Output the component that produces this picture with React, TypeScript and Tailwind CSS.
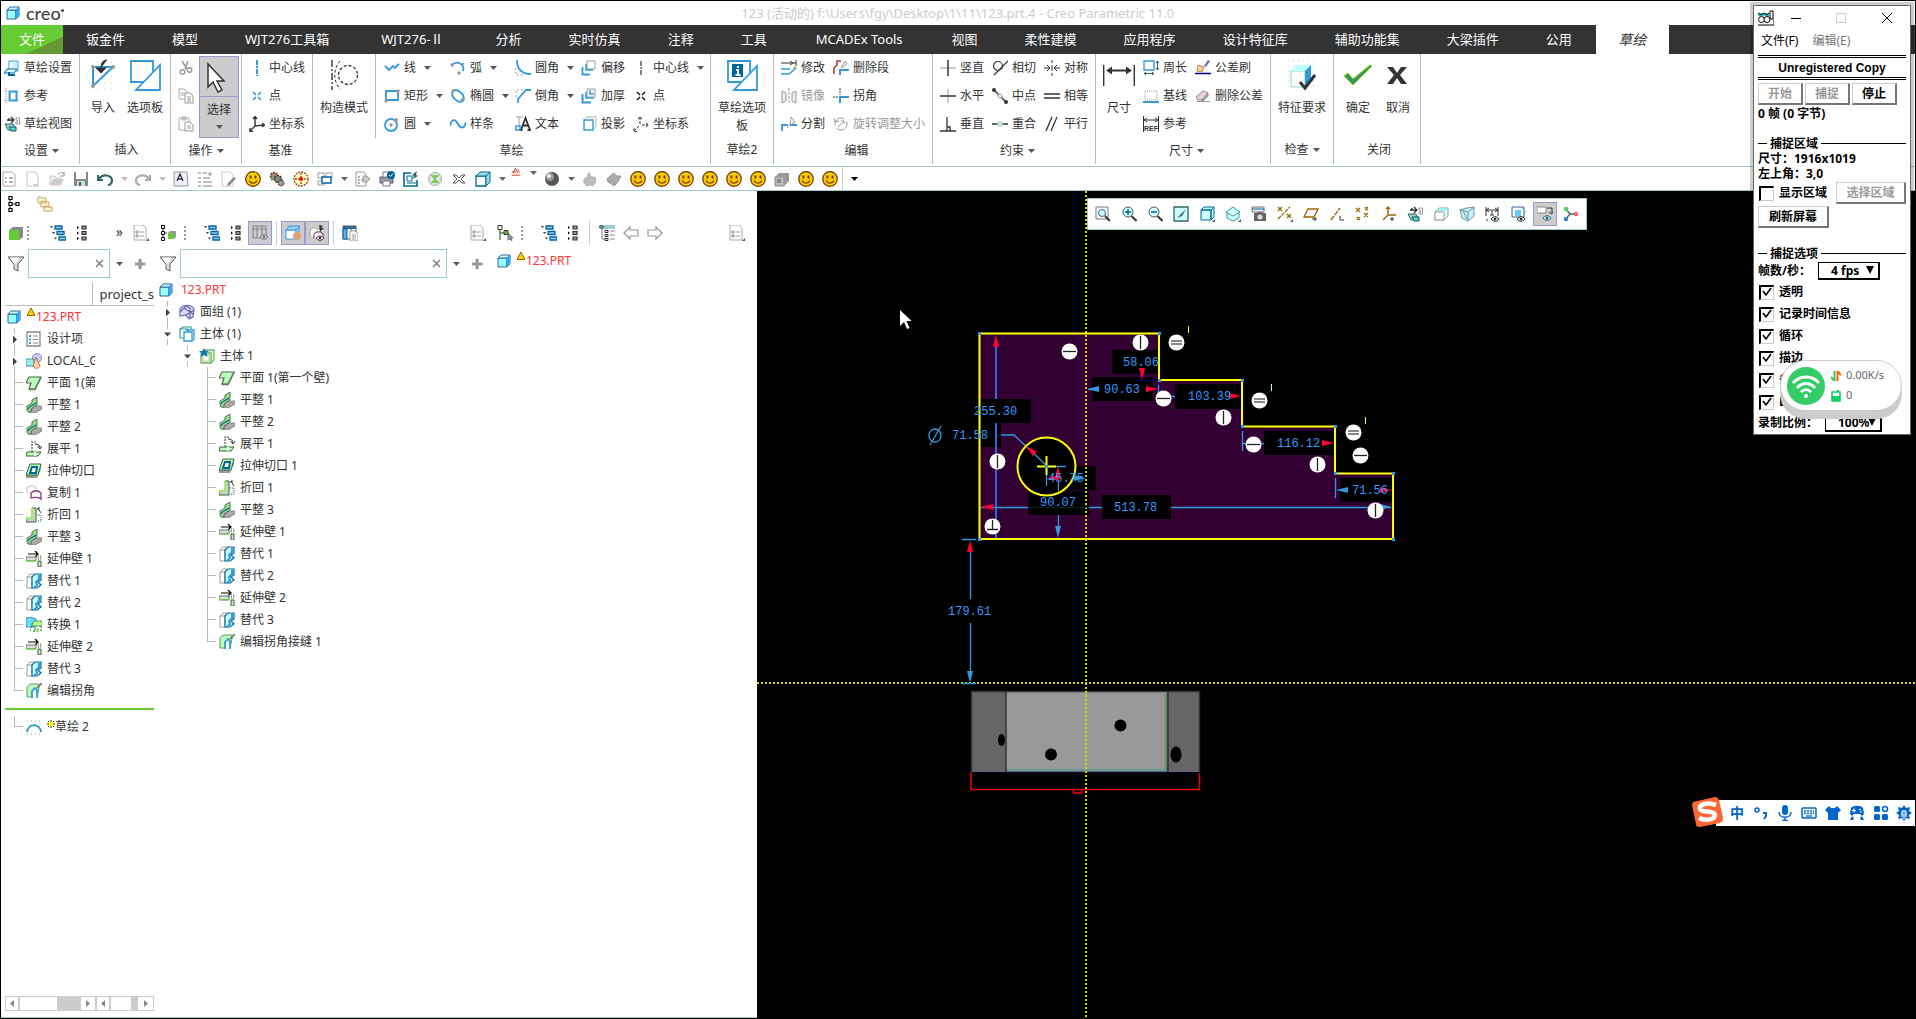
import type { ReactNode } from 'react'

const B = '#3399dd'
const G = '#999999'
const L = '#cccccc'
const D = '#333333'

// 16x16 icons
const ICONS: Record<string, ReactNode> = {
  sketchSetup: <><path d="M5 1h9v10H5z" fill="#fff" stroke={B} /><path d="M8 2h5v8H8z" fill="#cef" /><path d="M3 9h10l-3 4H0z" fill="#dff" stroke="#069" /><path d="M5 12v3h6" fill="none" stroke="#069" strokeWidth="2" /></>,
  reference: <><path d="M5.500 3v10M12.500 3v10M5 3.500h9M5 12.500h9" stroke={B} strokeWidth="2" /><path d="M2 0v16M0 3h4M0 12.500h4" stroke={G} strokeDasharray="1 1" /></>,
  sketchView: <><path d="M3 4h6M7 1l3 3-3 3M5 2v3" stroke={D} fill="none" strokeWidth="1.300" /><path d="M12 2h3.500v6H12v-2h1.500V4H12z" fill="#fff" stroke={G} /><path d="M1 8l3 6h8l-3-6z" fill="#9cc" stroke="#366" /><path d="M5 11h7v4H7z" fill="#6cc" stroke="#066" /></>,
  cut: <><path d="M4 1l5 8M10 1L7 9" stroke={G} strokeWidth="1.500" /><circle cx="4.500" cy="12" r="2.300" fill="none" stroke={G} strokeWidth="1.400" /><circle cx="11.500" cy="10" r="2.300" fill="none" stroke={G} strokeWidth="1.400" /></>,
  copy: <><path d="M1 1h5l3 3v7H1z" fill="#fff" stroke="#aaa" /><path d="M2.500 5h4M2.500 7h4" stroke="#aaa" /><path d="M7 5h5l3 3v7H7z" fill="#fff" stroke="#999" /><path d="M9 9h4M9 11h4M9 13h4" stroke="#999" /></>,
  paste: <><path d="M1 2h10v12H1z" fill="#fff" stroke="#aaa" /><path d="M4 1h4v3H4z" fill={L} stroke="#aaa" /><path d="M7 6h5l3 3v6H7z" fill="#fff" stroke="#999" /><path d="M9 10h4M9 12h4" stroke="#999" /></>,
  vline: <path d="M8 0v16" stroke={B} strokeWidth="2" strokeDasharray="5 1 2 1" />,
  pointBlue: <path d="M4 4l3 3M9 9l3 3M12 4l-3 3M7 9l-3 3" stroke={B} strokeWidth="1.600" />,
  csys: <path d="M6 1v9l9-1M6 10l-5 5M4 3l2-2.500L8 3M13 7l2.500 2-2.500 2M1 12v3.500h3" stroke={D} fill="none" strokeWidth="1.400" />,
  line: <path d="M1 6l4 4 4-4 2 2 4-4" stroke={B} strokeWidth="1.800" fill="none" />,
  rect: <><path d="M2 3h12v9H2z" stroke={B} strokeWidth="1.800" fill="none" /><circle cx="14" cy="3" r="1.800" fill={G} /><circle cx="2" cy="13" r="1.800" fill={G} /></>,
  circle: <><circle cx="7" cy="9" r="6" stroke={B} strokeWidth="1.800" fill="none" /><circle cx="7" cy="9" r="1.700" fill={G} /><circle cx="12" cy="4" r="2" fill={G} /></>,
  arc: <><path d="M2 5c5-5 13-1 11 6" stroke={B} strokeWidth="1.800" fill="none" /><circle cx="2" cy="5" r="1.700" fill={G} /><circle cx="9" cy="13" r="1.700" fill={G} /><circle cx="13" cy="4" r="1.300" fill={G} /></>,
  ellipse: <><ellipse cx="8" cy="8" rx="7" ry="4.500" transform="rotate(45 8 8)" stroke={B} strokeWidth="1.800" fill="none" /><circle cx="3" cy="3" r="1.700" fill={G} /><circle cx="12" cy="12" r="1.700" fill={G} /></>,
  spline: <path d="M0 10c2-9 6-6 8-2s6 6 8-2" stroke={B} strokeWidth="1.800" fill="none" />,
  fillet: <><path d="M2 0c0 9 5 14 14 14" stroke={B} strokeWidth="1.800" fill="none" /><path d="M1 8v7h7" stroke={G} strokeDasharray="2 2" fill="none" /></>,
  chamfer: <><path d="M3 15V11L11 2h5" stroke={B} strokeWidth="1.800" fill="none" /><path d="M1 9V2h8" stroke={G} strokeDasharray="2 2" fill="none" /></>,
  text: <><path d="M1 1h7M4 1v9" stroke={G} /><path d="M6 14l4.500-12L15 14M7.500 9.500h6M4.500 14h3M12.500 14H16" stroke={D} strokeWidth="1.800" fill="none" /><path d="M1 10h4v4H1z" fill="#fff" stroke={B} strokeWidth="1.600" /></>,
  offset: <><path d="M6 1h8v8H6z" fill="#fff" stroke={G} /><path d="M1.500 7v7.500H9" stroke={B} strokeWidth="1.800" fill="none" /><path d="M5 4v6h7" stroke={B} strokeWidth="1.400" fill="none" /></>,
  thicken: <><path d="M6 1h8v8H6z" fill="#fff" stroke={G} /><path d="M1.500 6v8.500H10" stroke={B} strokeWidth="2" fill="none" /><path d="M5 4v6h8M9 2v4h4" stroke={B} strokeWidth="1.500" fill="none" /></>,
  project: <><path d="M4 3l2-2h9v9l-2 3" fill="none" stroke={L} strokeWidth="1.500" /><path d="M3 4h9v10H3z" fill="#fff" stroke={B} strokeWidth="1.400" /></>,
  vlineBlack: <path d="M8 1v14" stroke={D} strokeWidth="1.200" strokeDasharray="5 1 2 1" />,
  pointBlack: <path d="M4 4l3 3M9 9l3 3M12 4l-3 3M7 9l-3 3" stroke="#000" strokeWidth="1.200" />,
  csysGray: <path d="M7 1v8M9 9h6M6 10l-5 5M5 3l2-2.500L9 3M13 7l2.500 2-2.500 2M1 12v3.500h3" stroke={D} fill="none" strokeDasharray="3 1" />,
  modify: <><path d="M0 3h15M15 0v6M9 1l3 2-3 2" stroke={D} fill="none" /><path d="M0 9h9M0 14h8l6-5" stroke={B} strokeWidth="1.500" fill="none" /><circle cx="14" cy="8" r="1.500" fill={G} /></>,
  mirror: <><path d="M1 3l4 2v8l-4 2zM15 3l-4 2v8l4 2z" fill="#eee" stroke={G} /><path d="M8 0v16" stroke={G} strokeDasharray="3 1" /></>,
  divide: <><path d="M1 15v-6h6M9 9h7" stroke={B} strokeWidth="1.800" fill="none" /><path d="M10 1l4 5-5 3zM9 9l-3 3" fill="#fff" stroke={G} /></>,
  delSeg: <><path d="M1 14V8l3-3V1h4" stroke="#a33" fill="none" strokeWidth="1.500" /><path d="M7 15v-5h9" stroke={B} strokeWidth="2" fill="none" /><path d="M8 8l4-7 2 3z" fill="#fff" stroke={G} /></>,
  corner: <><path d="M7 15V9h9" stroke={B} strokeWidth="2" fill="none" /><path d="M7 0v7M0 9h6" stroke={G} strokeDasharray="2 1" strokeWidth="2" /></>,
  rotate: <><circle cx="8" cy="8" r="6" fill="none" stroke={G} strokeDasharray="14 3" /><path d="M5 11l6-6M11 8V5H8M1 2l1 4 4-1" stroke={G} fill="none" /></>,
  vertical: <><path d="M0 8h16" stroke={L} strokeWidth="2" /><path d="M8 0v16" stroke={D} strokeWidth="1.500" /></>,
  horizontal: <><path d="M8 1v14" stroke={L} strokeWidth="2" /><path d="M0 8h16" stroke={D} strokeWidth="1.500" /></>,
  perp: <path d="M7 1v14M0 15h16M7 11h3v4" stroke={D} fill="none" strokeWidth="1.300" />,
  tangent: <><circle cx="6" cy="6" r="4.500" fill="none" stroke={D} strokeWidth="1.200" /><path d="M2 15L16 1" stroke={D} strokeWidth="1.200" /></>,
  midpoint: <><path d="M2 2l12 12" stroke={D} strokeWidth="1.300" /><circle cx="2" cy="2" r="2" fill={D} /><circle cx="14" cy="14" r="2" fill={D} /><circle cx="8" cy="8" r="2" fill="#fff" stroke={G} /></>,
  coincident: <><path d="M0 8h16" stroke={D} strokeWidth="1.500" /><circle cx="8" cy="8" r="2.300" fill="#cec" stroke="#9cc" /></>,
  symmetric: <path d="M0 8h5M3 5l3 3-3 3M16 8h-5M13 5l-3 3 3 3M8 0v3M8 5v6M8 13v3" stroke={D} fill="none" />,
  equal: <path d="M0 6h16M0 10h16" stroke={D} strokeWidth="1.300" />,
  parallel: <path d="M2 15L8 1M7 15l6-14" stroke={D} strokeWidth="1.300" />,
  perimeter: <><path d="M1 1h10v9H1z" fill="#fff" stroke={B} strokeWidth="1.400" /><path d="M14.500 1v9M13 3l1.500-2L16 3M13 8l1.500 2L16 8M1 13.500h10M3 12l-2 1.500L3 15M9 12l2 1.500L9 15" stroke="#366" fill="none" /></>,
  baseline: <><path d="M2 3h12v9H2z" fill="none" stroke={G} strokeDasharray="1 1" /><path d="M0 14h16" stroke={B} strokeWidth="2" /></>,
  refDim: <><path d="M.5 0v16M15.500 0v16M1 4h14M4 2L1 4l3 2M12 2l3 2-3 2" stroke={D} fill="none" /><text x="8" y="15" fontSize="7" fontWeight="bold" textAnchor="middle" fill={D} fontFamily="Liberation Sans">REF</text></>,
  brush: <><path d="M0 13.500h16" stroke="#009" strokeWidth="1.500" /><path d="M9 6l4-6 2 1-4 6z" fill="#66c" /><path d="M3 5l6 2-2 5-5-1z" fill="#fc9" stroke="#a85" /></>,
  eraser: <><path d="M1 9l7-6 5 2-6 7H3z" fill="#ecd" stroke="#888" /><path d="M7 12l6-7v3l-5 5z" fill="#9c9" stroke="#888" /><path d="M2 13.500h13" stroke="#999" /></>,
  docList: <><path d="M2 1h9l3 3v11H2z" fill="#fff" stroke="#aaa" /><path d="M4 7h2M4 11h2M8 7h4M8 11h4" stroke={G} strokeWidth="1.500" /></>,
  newDoc: <><path d="M2 1h8l3 3v11H2z" fill="#fff" stroke={L} strokeWidth="1.200" /><path d="M8 13h5v2H8z" fill={L} /></>,
  open: <><path d="M1 5h5l1 2h5v7H1z" fill="#eee" stroke={L} /><path d="M1 14l3-6h11l-3 6z" fill={L} /><path d="M9 4c1-3 4-3 5-1l1-2v4h-4" fill="none" stroke={G} /></>,
  save: <><path d="M1 1h14v14H1z" fill="#888" /><path d="M3 1h10v7H3z" fill="#fff" /><path d="M4 10h8v5H4z" fill="#cdd" /><path d="M6 11h2v4H6z" fill="#366" /></>,
  undo: <path d="M1 4v5h5M2 8c4-6 13-4 13 2 0 2-2 4-4 4" stroke="#366" strokeWidth="2.200" fill="none" />,
  redo: <path d="M15 4v5h-5M14 8C10 2 1 4 1 10c0 2 2 4 4 4" stroke="#aaa" strokeWidth="2.200" fill="none" />,
  note: <><path d="M1 1h13l1 14H1z" fill="#eef" stroke={G} /><path d="M4 10l3-7 3 7M5 8h4" fill="none" stroke={D} strokeWidth="1.300" /></>,
  treeGray: <path d="M1 2h3M6 2h4M1 7h3M6 7h7M1 11h3M6 11h9M1 15h3M6 15h9M11 3h4M13 1v4" stroke="#aaa" strokeWidth="1.500" />,
  docEdit: <><path d="M1 1h8l3 3v11H1z" fill="#fff" stroke={L} /><path d="M15 7l-6 7-3 1 1-3 6-6z" fill="#888" /></>,
  smile: <><circle cx="8" cy="8" r="7.300" fill="#fc0" stroke="#663300" strokeWidth="1.200" /><path d="M5.500 4.500v3M10.500 4.500v3" stroke="#630" strokeWidth="1.800" /><path d="M4 9.500c2 3.500 6 3.500 8 0" stroke="#630" fill="none" strokeWidth="1.200" /></>,
  gears: <><circle cx="5" cy="5" r="3.500" fill="#a87" stroke="#543" strokeDasharray="2 1" strokeWidth="1.500" /><circle cx="9" cy="8" r="3.500" fill="#888" stroke="#333" strokeDasharray="2 1" strokeWidth="1.500" /><circle cx="12" cy="12" r="3" fill="#999" stroke="#422" strokeDasharray="2 1" /><circle cx="3" cy="8" r="1.500" fill="#6a6" /></>,
  compass: <><circle cx="8" cy="8" r="7" fill="#ffc" stroke="#933" strokeDasharray="2 1" strokeWidth="1.300" /><path d="M8 2v12M2 8h12" stroke="#960" strokeWidth="1.500" strokeDasharray="2 1" /><circle cx="8" cy="8" r="2" fill="#f00" /></>,
  windows: <><path d="M1 2h6v5H1zM9 2h6v5H9zM1 10h6v4H1z" fill="#fff" stroke={G} /><path d="M5 6h9v6H5z" fill="#fff" stroke="#069" strokeWidth="1.400" /></>,
  docArrow: <><path d="M1 1h8l2 3v11H1z" fill="#fff" stroke={G} /><path d="M3 6h2M3 9h2M3 12h2M6 9h2" stroke={G} strokeWidth="1.500" /><path d="M8 5h4l3 3-3 3H8z" fill={L} stroke={G} /></>,
  print: <><path d="M1 6h13v6H1z" fill="#99a" stroke="#556" /><path d="M4 1h6v5H4zM4 10h7v5H4z" fill="#fff" stroke="#778" /><circle cx="12" cy="4" r="4" fill="#069" /><path d="M10 4l1.500 1.500L14 2.500" stroke="#fff" fill="none" /></>,
  exportBox: <><path d="M8 2H1v13h13V9" stroke="#069" fill="none" strokeWidth="1.600" /><path d="M4 5h5v5H4zM4 12h9" fill="none" stroke="#069" /><path d="M9 8l2-3-2-1 5-4-1 4 2 1z" fill="#366" /></>,
  globe: <><circle cx="8" cy="8" r="6.500" fill="#dde6dd" stroke="#aaa" /><path d="M4 4l4 4 4-4M4 12l4-4 4 4" fill="#8c5" stroke="#7b5" /></>,
  closeWin: <path d="M2 4h3l3 3 3-3h3l-4 4 4 4h-3L8 9l-3 3H2l4-4z" fill="#fff" stroke="#555" />,
  cubeLine: <><path d="M1 5h10v10H1z" fill="#fff" stroke="#069" strokeWidth="1.300" /><path d="M1 5l4-4h10l-4 4zM11 15l4-4V1l-4 4z" fill="#9dd" stroke="#069" /></>,
  relations: <><path d="M1 9h14v5H1z" fill="#ffc" /><path d="M1 8h13M3 10l4-8 2 4 4-2M1 13h14" stroke="#c33" fill="none" strokeWidth="1.500" /></>,
  sphere: <><circle cx="8" cy="8" r="7" fill="#555" /><circle cx="6" cy="6" r="4" fill="#999" /><circle cx="5" cy="5" r="2" fill="#eee" /></>,
  blob: <path d="M5 3l3-2 1 4 5 1v6l-3 3H4l-3-4 1-4 3-1z" fill="#bbb" />,
  teapot: <path d="M1 8l3-3 4-3 3 3h4l-3 6-4 4-6-4z" fill="#aaa" stroke="#888" strokeDasharray="2 1" />,
  box: <><path d="M1 6h9v9H1z" fill="#bbb" stroke="#888" /><path d="M1 6l4-4h10l-5 4zM10 15l5-5V2l-5 4z" fill="#999" /><path d="M3 8h4v4H3z" fill="#888" /></>,
  tree: <><path d="M3 3v11M3 8h6" stroke={D} fill="none" /><path d="M2 .5h3v3H2zM2 6.500h3v3H2zM2 12.500h3v3H2zM9 6.500h3v3H9z" fill="#fff" stroke="#000" strokeWidth="1.200" /></>,
  folders: <path d="M1 1h3l1 1h4v5H1zM4 5h3l1 1h4v5H4zM7 10h3l1 1h4v4H7z" fill="#ffc" stroke="#c96" />,
  cubeGreen: <><path d="M1 5h10v10H1z" fill="#6c3" /><path d="M1 5l4-3h10l-4 3zM11 15l4-3V2l-4 3z" fill="#888" /></>,
  treeBlue: <><path d="M5 1h7v3H5zM7 6.500h7v3H7zM9 12h7v3H9z" fill="#9cf" stroke="#069" strokeWidth="1.300" /><path d="M0 1h3l-1.500 2zM2 7h3L3.500 9zM4 12.500h3l-1.500 2z" fill={D} /></>,
  treeDots: <><path d="M9 1h4v3H9zM9 6.500h4v3H9zM9 12h4v3H9z" fill="#999" stroke={D} strokeWidth="1.200" /><path d="M4 1l2 1.500L4 4zM4 6.500L6 8l-2 1.500zM4 12l2 1.500L4 15z" fill="#000" /></>,
  docSettings: <><path d="M1 0h9l3 3v12H1z" fill="#fff" stroke="#aaa" /><circle cx="4" cy="7" r="1.200" fill="none" stroke="#888" /><circle cx="4" cy="11" r="1.200" fill="none" stroke="#888" /><path d="M6.500 7H11M6.500 11H11" stroke="#99a" /><path d="M16 13v3h-3z" fill="#555" /></>,
  treeCube: <><path d="M3 2v11M3 8h4" stroke={D} /><path d="M1.500 .5h3v3h-3zM1.500 6.500h3v3h-3zM1.500 12.500h3v3h-3z" fill="#fff" stroke="#000" /><path d="M8 8h6v6H8z" fill="#6c3" /><path d="M8 8l2-2h6l-2 2zM14 14l2-2V6l-2 2z" fill="#999" /></>,
  columns: <><path d="M1 1h13v12H1zM1 4h13M5 1v12M10 1v12" fill="none" stroke="#888" strokeWidth="1.200" /><path d="M8 12c2-3 6-3 8 0-2 3-6 3-8 0z" fill="#ccc" stroke="#777" /><circle cx="12" cy="12" r="1.300" fill="#777" /></>,
  cubeBall: <><path d="M1 5h10v9H1z" fill="#fff" stroke={B} /><path d="M1 5l3-4h11l-4 4zM11 14l3-3V2l-3 3z" fill="#9cf" stroke={B} /><circle cx="12" cy="11" r="4" fill="#dba37a" /></>,
  quiltEye: <><path d="M1 12V5c3-3 6-3 8 0 2-2 4-2 6 0" fill="#fff" stroke={G} /><path d="M5 14V9c3-3 6-3 9 0v4" fill="#fff" stroke="#969" strokeWidth="1.300" /><path d="M10 0l4 1-2 2h3l-4 4" fill={D} /><path d="M7 13c2-2.500 6-2.500 8 0-2 3-6 3-8 0z" fill="#fff" stroke={D} /><circle cx="11" cy="13" r="1.300" fill={D} /></>,
  tableDoc: <><path d="M1 1h13v13H1z" fill="#fff" stroke="#555" /><path d="M1 1h13v3H1z" fill="#369" /><path d="M1 4h4v10H1z" fill="#6af" stroke="#069" /><path d="M9 4v10" stroke="#555" /><path d="M8 6h5l3 3v7H8z" fill="#fff" stroke="#999" /><path d="M10 10h4M10 12h4M10 14h4" stroke="#99a" /></>,
  treeCursor: <><path d="M3 2v13M3 8h4" stroke={D} fill="none" /><path d="M1 .5h4v4H1z" fill="#fff" stroke={D} /><path d="M7 5.500h4v4H7z" fill="#6c3" stroke={D} /><path d="M11 8l5 5h-2l1 3-2-2-2 1z" fill="#999" stroke="#555" strokeWidth=".7" /></>,
  treeHi: <><path d="M0 0h16v4H0z" fill="#9cc" /><path d="M1 1h3v2H1z" fill="#fff" stroke={D} /><path d="M3 4v10h3" stroke="#888" fill="none" /><path d="M6 5.500h3v2H6zM6 9.500h3v2H6zM6 13.500h3v2H6z" fill="#fff" stroke={D} /><path d="M11 6h5M11 10h5M11 14h5" stroke="#888" /></>,
  arrowL: <path d="M1 8l6-6v3h8v6H7v3z" fill="#fff" stroke={G} strokeWidth="1.200" />,
  arrowR: <path d="M15 8L9 2v3H1v6h8v3z" fill="#fff" stroke={G} strokeWidth="1.200" />,
  funnel: <><path d="M0 1h16l-6 7v7l-4-2V8z" fill="#ddd" stroke="#555" /><path d="M2 1.500h9L7 8v4l-.5-4z" fill="#fff" /></>,
  plus: <path d="M7 2v12M1 8h12" stroke={G} strokeWidth="3.500" />,
  part: <><path d="M1 5h9v9H1z" fill="#9ff" stroke="#369" /><path d="M1 5l3-3h9l-3 3zM10 14l3-3V2l-3 3z" fill="#cff" stroke="#369" /><path d="M10 14l3-3V2l-3 3z" fill="#3af" /></>,
  designItems: <><path d="M1 1h13v14H1z" fill="#fff" stroke="#888" strokeWidth="1.300" /><path d="M3 4h2v2H3zM3 7.500h2v2H3zM3 11h2v2H3z" fill={B} /><path d="M7 5h5M7 8.500h5M7 12h5" stroke="#888" /></>,
  localGroup: <><circle cx="11" cy="5" r="4.500" fill="#ccf" stroke="#88a" /><path d="M0 6h8v7H0z" fill="#9ee" stroke="#399" /><path d="M10 4l4 9c-1 3-6 3-7 0z" fill="#fc9" stroke="#a75" /></>,
  planar: <><path d="M3 2h12L9 14H3l2-6H0z" fill="#bfb" stroke="#565" strokeWidth="1.200" /><path d="M3 14.500h6l6-12" fill="none" stroke="#676" strokeWidth="1.500" /></>,
  flat: <><path d="M5 13l4-4h7v3l-7 4H4z" fill="#aaa" stroke="#777" strokeWidth=".8" /><path d="M1 9l5-3V3l5-3v8l-6 4v3H2L1 13z" fill="#9d9" stroke="#464" strokeWidth=".9" /><path d="M2 12c1-3 4-3 8-6" stroke="#067" fill="none" strokeWidth="1.200" /></>,
  unbend: <><path d="M6 11V1h4" fill="none" stroke="#363" strokeDasharray="2 1" strokeWidth="1.200" /><path d="M1 11h14l-3 4H0z" fill="#bfb" stroke="#363" /><path d="M8 11h2v4H8z" fill="#fff" /><path d="M9 3c3 0 5 1 5 4M11.500 5l2.500 3 2-3" stroke={D} fill="none" /></>,
  extrude: <><path d="M3 3h12v3l-4 9H0v-3z" fill="#999" /><path d="M4 1h11l-3 11H0z" fill="#bfb" stroke="#363" /><path d="M6 4h5l-1 6H4z" fill="#fff" stroke="#069" strokeWidth="2" /></>,
  copyGeo: <><path d="M1 8V3c3-3 7-3 10 1" fill="none" stroke={L} strokeWidth="1.300" /><path d="M5 13V8c3-3 7-3 10 0v6c-2-2-7-2-10-1z" fill="#fff" stroke="#838" strokeWidth="1.300" /></>,
  bendBack: <><path d="M0 11h6V1h4v14H0z" fill="#ccc" stroke="#363" /><path d="M0 11h6V1" fill="none" stroke="#9e6" strokeWidth="2" /><path d="M11 8h4v6h-4" fill="none" stroke="#363" strokeDasharray="1 1" /><path d="M12 3V1h2M12 1l3 5" stroke={D} fill="none" /></>,
  extend: <><path d="M2 3h10M9 0l3 3-3 3" stroke="#000" fill="none" strokeWidth="1.200" /><path d="M0 6h10v4H0z" fill="#ddd" stroke="#676" /><path d="M0 9.500h10" stroke="#6c3" /><path d="M12 5h3v3h-3z" fill="none" stroke="#363" strokeDasharray="1 1" /><path d="M12 10h3v6h-3z" fill="#ddd" stroke="#363" /></>,
  replace: <><path d="M1 4h5v11H1zM1 4l3-3h4" fill="#fff" stroke="#999" /><path d="M6 4l3-3h6v6l-3 2 3 3-4 3H6z" fill="#cff" stroke="#069" strokeWidth="1.200" /><path d="M13 2v4l-3 3 1 3-3 3" stroke={B} strokeWidth="2" fill="none" /></>,
  convert: <><path d="M0 1l4-1 6 2v8H0z" fill="#6df" stroke="#39a" /><path d="M6 7l2-3h8v5H6zM6 9l-2 5M15 9v6M8 15v-3h4v3" fill="#bf9" stroke="#363" strokeDasharray="2 1" /></>,
  cornerSeam: <><path d="M1 4l3-3h9v4l-2 9H1z" fill="#bfb" stroke="#696" /><path d="M6 15V8l3-3 2 2v8" fill="#fff" stroke={B} strokeWidth="1.800" /><path d="M16 0l-5 5" stroke="#666" strokeWidth="1.500" /></>,
  quilt: <path d="M1 5c3-5 11-5 14 0l-1 8-4 2-3-4-6 1zM1 8l6-6 4 2v11M5 4l9 6M7 11l8-5" fill="#ddf" stroke="#66a" strokeWidth="1.200" />,
  bodies: <><path d="M1 3l3-2h8v2M1 3h8v9H1z" fill="#fff" stroke="#399" strokeWidth="1.200" /><path d="M5 6h8v9H5z" fill="#fff" stroke={B} strokeWidth="1.300" /><path d="M13 15l2-2V4h-8" stroke={B} fill="none" strokeWidth="1.300" /></>,
  body: <><path d="M2 5h10v10H2zM2 5l3-3h10v10l-3 3" fill="#cfc" stroke="#8a6" strokeWidth="1.300" /><path d="M4 7h6v6H4z" fill="#fff" stroke="#aca" /><path d="M5 0l1.500 3H10L7.500 5l1 4L5 7 1.500 9l1-4L0 3h3.500z" fill="#17b" /></>,
  sketch: <><path d="M1 13c1-9 13-9 14 0" stroke={B} strokeWidth="2" fill="none" /><path d="M1 2h14M1 15h14" stroke={G} strokeDasharray="1 3" /></>,
  zoomFit: <><path d="M1 1h12v12H1z" fill="none" stroke="#777" /><circle cx="7" cy="7" r="3.500" fill="#cff" stroke="#369" /><path d="M10 10l5 5" stroke={D} strokeWidth="2" /></>,
  zoomIn: <><circle cx="7" cy="6" r="5" fill="#cff" stroke="#555" /><path d="M7 3v6M4 6h6" stroke="#069" strokeWidth="1.500" /><path d="M10.500 10l5 5" stroke={D} strokeWidth="2" /></>,
  zoomOut: <><circle cx="7" cy="6" r="5" fill="#cff" stroke="#555" /><path d="M4 6h6" stroke="#069" strokeWidth="1.500" /><path d="M10.500 10l5 5" stroke={D} strokeWidth="2" /></>,
  repaint: <><path d="M1 1h14v14H1z" fill="#cff" stroke="#366" strokeWidth="1.300" /><path d="M13 3l-6 6-3 3 5-2z" fill="#366" /></>,
  shaded: <><path d="M2 4l3-3h10l-3 3zM2 4h10v10H2zM12 14l3-3V1l-3 3z" fill="#cff" stroke="#069" /><path d="M16 13v3h-3z" fill="#555" /></>,
  views: <><path d="M1 6l7-5 7 5-7 4zM2 7v5l6 3 6-3V7" fill="#cff" stroke="#399" /><path d="M16 13v3h-3z" fill="#555" /></>,
  camera: <><path d="M1 1h12v5H1z" fill="#eee" stroke="#777" /><path d="M1 3h12" stroke="#069" /><path d="M3 7h3l1-1h4l1 1h3v8H3z" fill="#666" /><circle cx="9" cy="11" r="2.500" fill="#ddd" /></>,
  axes: <><path d="M1 13L13 1" stroke="#960" fill="none" strokeDasharray="4 1" strokeWidth="1.300" /><path d="M1 1l4 4M5 1L1 5M10 8l4 4M14 8l-4 4" stroke="#960" strokeWidth="1.300" /><path d="M16 13v3h-3z" fill="#555" /></>,
  planes: <><path d="M1 11l4-8h10l-4 8z" fill="#fff" stroke="#960" strokeWidth="1.300" /><path d="M9 13h5M12 11v4" stroke={D} fill="none" /></>,
  axis: <><path d="M2 14L11 2" stroke="#960" fill="none" strokeDasharray="5 1" strokeWidth="1.400" /><path d="M11 10v4h4" stroke={D} fill="none" /></>,
  points: <path d="M1 2l4 4M5 2L1 6M9 7l4 4M13 7l-4 4M10 1l3 3M13 1l-3 3M2 11l3 3M5 11l-3 3" stroke="#960" strokeWidth="1.300" />,
  csysTan: <><path d="M7 1v8h8M7 9l-5 5M5 3l2-2 2 2" stroke="#960" fill="none" strokeWidth="1.400" /><path d="M11 11v4M9 13h4" stroke={D} /></>,
  section: <><path d="M2 6l4-4h9v8l-4 4H2z" fill="#dff" stroke="#999" /><path d="M2 6h9v8H2z" fill="#fff" stroke="#999" /><path d="M4 5h9l2-3H6z" fill="#9ee" /></>,
  crystal: <><path d="M1 4l7-2 7-1v9l-6 5-6-3z" fill="#cef" stroke="#699" /><path d="M1 4l8 2 6-5M9 6v9M4 5l4 8" stroke="#699" fill="none" /></>,
  dims: <><path d="M1 1v9M13 1v9M1 4h12M4 2L1 4l3 2M10 2l3 2-3 2M7 5v4M5 9h4" stroke={D} fill="none" /><circle cx="2" cy="14" r="1.300" fill={G} /><path d="M6 13c2-3 6-3 8 0-2 3-6 3-8 0z" fill="#cee" stroke={D} /><circle cx="10" cy="13" r="1.300" fill={D} /></>,
  constr: <><path d="M1 1h12v10H1z" fill="#fff" stroke="#369" /><path d="M4 4h6v6H4z" fill="#6cf" /><path d="M10 1l4 4-1 6" stroke={G} fill="none" /><path d="M6 13c2-3 6-3 8 0-2 3-6 3-8 0z" fill="#cee" stroke={D} /><circle cx="10" cy="13" r="1.300" fill={D} /></>,
  annot: <><path d="M0 1h9v6H0z" fill="#fff" stroke="#888" /><path d="M10 2h5v5M12 6l2.500 2L16 6" fill="none" stroke={D} /><path d="M6 12c2-3 6-3 8 0-2 3-6 3-8 0z" fill="#cff" stroke="#366" /><circle cx="10" cy="12" r="1.500" fill="#366" /></>,
  spin: <><path d="M3 3l4 5-4 5M7 8h6" stroke="#366" fill="none" strokeWidth="1.300" /><circle cx="3" cy="3" r="2.300" fill="#6c6" /><circle cx="3" cy="13" r="2.300" fill="#38c" /><circle cx="13" cy="8" r="2.300" fill="#f66" /></>,
}

// 32x32 icons
const BIG: Record<string, ReactNode> = {
  import: <><path d="M3 3h26M3 10h26M3 17h26M3 24h26M3 30h26" stroke={L} strokeDasharray="1 6" /><path d="M6 8h20L6 27z" fill="none" stroke={B} strokeWidth="2" /><path d="M20 1c-4 0-6 3-6 8M9 9h10l-5 5z" fill={D} stroke={D} /><circle cx="6" cy="8" r="2" fill={G} /><circle cx="26" cy="8" r="2" fill={G} /><circle cx="6" cy="27" r="2" fill={G} /></>,
  palette: <><path d="M2 2h22v21H2z" fill="#fff" stroke={B} strokeWidth="1.800" /><path d="M31 6v25H7z" fill="#fff" stroke={B} strokeWidth="1.800" /></>,
  select: <path d="M5 3v23l5-5 5 10 4-2-5-9h7z" fill="#fff" stroke={D} strokeWidth="1.500" />,
  construct: <><path d="M4 1v30" stroke={D} strokeWidth="1.400" strokeDasharray="7 2 2 2" /><path d="M12 2C5 10 5 22 12 30" fill="none" stroke={D} strokeDasharray="3 2" /><circle cx="20" cy="16" r="9.500" fill="none" stroke={D} strokeWidth="1.300" strokeDasharray="3 2" /></>,
  paletteInfo: <><path d="M2 2h22v21H2z" fill="#fff" stroke={B} strokeWidth="1.800" /><path d="M31 7v24H8z" fill="#fff" stroke={B} strokeWidth="1.800" /><path d="M6 5h11v13H6z" fill="#069" /><path d="M12 7v2M10 11h2v5M9.500 16h5" stroke="#fff" strokeWidth="2" /></>,
  dimension: <><path d="M.7 6v21M31.300 6v21" stroke={D} strokeWidth="1.400" /><path d="M3 11.500l6-4v3h14v-3l6 4-6 4v-3H9v3z" fill={D} /></>,
  feature: <><path d="M2 2h28M2 7h28M2 12h28M2 17h28M2 22h28M2 27h28" stroke={L} strokeDasharray="1 4" /><path d="M5 12h14v16H5z" fill="#fff" stroke="#9cc" /><path d="M5 12l6-6h14l-6 6z" fill="#bff" /><path d="M19 28l6-6V6l-6 6z" fill={B} /><path d="M14 23l5 6 10-13" fill="none" stroke={D} strokeWidth="3" /></>,
  ok: <path d="M2 17l4-3 5 6L28 6l2 1L11 26z" fill="#396" stroke="#9c0" />,
  cancel: <path d="M5 8h6l4 6 4-6h6l-7 8 7 9h-6l-4-6-4 6H5l7-9z" fill={D} />,
}

function Icon({ name, size = 'size-4' }: { name: string; size?: string }) {
  return <svg viewBox="0 0 16 16" className={`${size} shrink-0`}>{ICONS[name]}</svg>
}

function Caret({ className = 'text-[#555]' }: { className?: string }) {
  return (
    <svg viewBox="0 0 7 4" className={`h-1 w-[7px] shrink-0 ${className}`}>
      <path d="M0 0h7L3.500 4z" fill="currentColor" />
    </svg>
  )
}

const TABS = [
  { text: '钣金件' },
  { text: '模型' },
  { text: 'WJT276工具箱' },
  { text: 'WJT276-Ⅱ', pad: 'px-7' },
  { text: '分析' },
  { text: '实时仿真' },
  { text: '注释' },
  { text: '工具' },
  { text: 'MCADEx Tools', pad: 'px-[25px]' },
  { text: '视图' },
  { text: '柔性建模' },
  { text: '应用程序' },
  { text: '设计特征库' },
  { text: '辅助功能集' },
  { text: '大梁插件' },
  { text: '公用' },
]

type Cmd = { icon: string; text: string; menu?: boolean; off?: boolean }

function CmdColumn({ items, className }: { items: Cmd[]; className: string }) {
  return (
    <div className={`flex flex-col ${className}`}>
      {items.map((c) => (
        <button key={c.icon} className={`flex h-7 items-center gap-1 whitespace-nowrap ${c.off ? 'text-[#999]' : ''}`}>
          <Icon name={c.icon} />
          {c.text}
          {c.menu && <span className="ml-1"><Caret /></span>}
        </button>
      ))}
    </div>
  )
}

function BigCmd({ icon, text, className }: { icon: string; text: string; className: string }) {
  return (
    <button className={`flex flex-col items-center gap-2 pt-[5px] ${className}`}>
      <svg viewBox="0 0 32 32" className="size-8 shrink-0">{BIG[icon]}</svg>
      <span className="leading-[18px]">{text}</span>
    </button>
  )
}

function Group({ label, menu, className, children }: { label: string; menu?: boolean; className: string; children: ReactNode }) {
  return (
    <section className={`mb-0.5 flex shrink-0 flex-col border-r border-[#bbb] ${className}`}>
      <div className="flex h-[85px]">{children}</div>
      <div className="flex h-7 items-center justify-center gap-1">
        {label}
        {menu && <Caret />}
      </div>
    </section>
  )
}

function Ribbon() {
  return (
    <div className="flex h-[113px] shrink-0 overflow-hidden border-b border-[#9cc] bg-white text-xs text-[#333]">
      <Group label="设置" menu className="w-[79px] pl-[3px]">
        <CmdColumn className="w-[72px]" items={[{ icon: 'sketchSetup', text: '草绘设置' }, { icon: 'reference', text: '参考' }, { icon: 'sketchView', text: '草绘视图' }]} />
      </Group>
      <Group label="插入" className="w-[91px] pl-[3px]">
        <BigCmd icon="import" text="导入" className="w-10" />
        <BigCmd icon="palette" text="选项板" className="w-11" />
      </Group>
      <Group label="操作" menu className="w-[71px]">
        <CmdColumn className="w-7 pl-[7px]" items={[{ icon: 'cut', text: '' }, { icon: 'copy', text: '' }, { icon: 'paste', text: '' }]} />
        <button className="mt-0.5 flex w-10 flex-col items-center border border-[#99c] bg-[#ccc]">
          <span className="flex h-10 w-full justify-center border-b border-[#99c] pt-1">
            <svg viewBox="0 0 32 32" className="size-8">{BIG.select}</svg>
          </span>
          <span className="mt-1 mb-1.5 leading-[18px]">选择</span>
          <Caret />
        </button>
      </Group>
      <Group label="基准" className="w-[71px] pl-[7px]">
        <CmdColumn className="w-16" items={[{ icon: 'vline', text: '中心线' }, { icon: 'pointBlue', text: '点' }, { icon: 'csys', text: '坐标系' }]} />
      </Group>
      <Group label="草绘" className="w-[398px]">
        <div className="flex w-[63px] justify-center border-r border-[#bbb]">
          <BigCmd icon="construct" text="构造模式" className="w-14" />
        </div>
        <CmdColumn className="ml-2 w-[66px]" items={[{ icon: 'line', text: '线', menu: true }, { icon: 'rect', text: '矩形', menu: true }, { icon: 'circle', text: '圆', menu: true }]} />
        <CmdColumn className="w-[65px]" items={[{ icon: 'arc', text: '弧', menu: true }, { icon: 'ellipse', text: '椭圆', menu: true }, { icon: 'spline', text: '样条' }]} />
        <CmdColumn className="w-[66px]" items={[{ icon: 'fillet', text: '圆角', menu: true }, { icon: 'chamfer', text: '倒角', menu: true }, { icon: 'text', text: '文本' }]} />
        <CmdColumn className="w-[52px]" items={[{ icon: 'offset', text: '偏移' }, { icon: 'thicken', text: '加厚' }, { icon: 'project', text: '投影' }]} />
        <CmdColumn className="w-[74px]" items={[{ icon: 'vlineBlack', text: '中心线', menu: true }, { icon: 'pointBlack', text: '点' }, { icon: 'csysGray', text: '坐标系' }]} />
      </Group>
      <Group label="草绘2" className="w-[63px] items-center">
        <BigCmd icon="paletteInfo" text="草绘选项板" className="w-12" />
      </Group>
      <Group label="编辑" className="w-[159px] pl-[7px]">
        <CmdColumn className="w-[52px]" items={[{ icon: 'modify', text: '修改' }, { icon: 'mirror', text: '镜像', off: true }, { icon: 'divide', text: '分割' }]} />
        <CmdColumn className="w-[94px]" items={[{ icon: 'delSeg', text: '删除段' }, { icon: 'corner', text: '拐角' }, { icon: 'rotate', text: '旋转调整大小', off: true }]} />
      </Group>
      <Group label="约束" menu className="w-[163px] pl-[7px]">
        <CmdColumn className="w-[52px]" items={[{ icon: 'vertical', text: '竖直' }, { icon: 'horizontal', text: '水平' }, { icon: 'perp', text: '垂直' }]} />
        <CmdColumn className="w-[52px]" items={[{ icon: 'tangent', text: '相切' }, { icon: 'midpoint', text: '中点' }, { icon: 'coincident', text: '重合' }]} />
        <CmdColumn className="w-[46px]" items={[{ icon: 'symmetric', text: '对称' }, { icon: 'equal', text: '相等' }, { icon: 'parallel', text: '平行' }]} />
      </Group>
      <Group label="尺寸" menu className="w-[175px] pl-[7px]">
        <BigCmd icon="dimension" text="尺寸" className="w-8" />
        <CmdColumn className="ml-2 w-[52px]" items={[{ icon: 'perimeter', text: '周长' }, { icon: 'baseline', text: '基线' }, { icon: 'refDim', text: '参考' }]} />
        <CmdColumn className="w-[70px]" items={[{ icon: 'brush', text: '公差刷' }, { icon: 'eraser', text: '删除公差' }]} />
      </Group>
      <Group label="检查" menu className="w-[63px] items-center">
        <BigCmd icon="feature" text="特征要求" className="w-14" />
      </Group>
      <Group label="关闭" className="w-[87px] pl-1">
        <BigCmd icon="ok" text="确定" className="w-10" />
        <BigCmd icon="cancel" text="取消" className="w-10" />
      </Group>
    </div>
  )
}

// "v" marks a drop-down arrow for the icon before it
const QUICK = ['docList', 'newDoc', 'open', 'save', 'undo', 'v', 'redo', 'v', 'note', 'treeGray', 'docEdit', 'smile', 'gears', 'compass', 'windows', 'v', 'docArrow', 'print', 'exportBox', 'globe', 'closeWin', 'cubeLine', 'v', 'relations', 'v', 'sphere', 'v', 'blob', 'teapot', 'smile', 'smile', 'smile', 'smile', 'smile', 'smile', 'box', 'smile', 'smile']

function QuickBar() {
  return (
    <div className="flex h-6 shrink-0 items-center overflow-hidden border-b border-[#9cc] bg-white">
      <div className="-ml-1 flex items-center">
        {QUICK.map((q, i) => {
          if (q === 'v') {
            const off = i < 8
            return (
              <button key={i} aria-label="更多" className={`flex w-3.5 justify-center ${i === 24 ? 'self-start pt-1' : ''}`}>
                <Caret className={off ? 'text-[#bbb]' : 'text-[#666]'} />
              </button>
            )
          }
          if (q === 'relations') return <button key={i} aria-label={q} className="flex w-[17px] self-start pl-0.5"><Icon name={q} size="size-2.5" /></button>
          return <button key={i} aria-label={q} className="flex w-6 justify-center"><Icon name={q} /></button>
        })}
        <button aria-label="自定义" className="flex h-[23px] w-6 items-center justify-center border-l border-[#ccc]"><Caret className="text-black" /></button>
      </div>
    </div>
  )
}

type Node = { icon: string; text: string }

const FEATURES: Node[] = [
  { icon: 'planar', text: '平面 1(第一个壁)' },
  { icon: 'flat', text: '平整 1' },
  { icon: 'flat', text: '平整 2' },
  { icon: 'unbend', text: '展平 1' },
  { icon: 'extrude', text: '拉伸切口 1' },
  { icon: 'copyGeo', text: '复制 1' },
  { icon: 'bendBack', text: '折回 1' },
  { icon: 'flat', text: '平整 3' },
  { icon: 'extend', text: '延伸壁 1' },
  { icon: 'replace', text: '替代 1' },
  { icon: 'replace', text: '替代 2' },
  { icon: 'convert', text: '转换 1' },
  { icon: 'extend', text: '延伸壁 2' },
  { icon: 'replace', text: '替代 3' },
  { icon: 'cornerSeam', text: '编辑拐角接缝 1' },
]

const BODY_FEATURES = FEATURES.filter((f) => f.icon !== 'copyGeo' && f.icon !== 'convert')

function Leaf({ icon, text, last, mark }: Node & { last?: boolean; mark?: ReactNode }) {
  return (
    <li className="flex h-[22px] items-center">
      <span className="flex h-full w-[9px] shrink-0 flex-col">
        <span className="h-1/2 border-b border-l border-[#bbb]" />
        {!last && <span className="h-1/2 border-l border-[#bbb]" />}
      </span>
      <span className="mr-[5px] ml-[3px] flex"><Icon name={icon} /></span>
      {mark}
      <span className="whitespace-nowrap">{text}</span>
    </li>
  )
}

function Branch({ icon, text, open }: Node & { open?: boolean }) {
  return (
    <li className="flex h-[22px] items-center">
      <svg viewBox="0 0 9 22" className="h-[22px] w-[9px] shrink-0">
        <path d="M3.500 0v6M3.500 16v6" stroke="#bbb" />
        {open ? <path d="M0 9.500h7L3.500 13.500z" fill="#444" /> : <path d="M2 7.500l4 4-4 4z" fill="#444" />}
      </svg>
      <span className="mr-[5px] ml-1.5 flex"><Icon name={icon} /></span>
      <span className="whitespace-nowrap">{text}</span>
    </li>
  )
}

function RootNode({ warn }: { warn?: boolean }) {
  return (
    <div className="flex h-[22px] items-center text-[#f33]">
      <Icon name="part" />
      {warn ? (
        <svg viewBox="0 0 8 8" className="mb-2.5 ml-1 size-2"><path d="M4 0l4 7.500H0z" fill="#fc0" stroke="#960" /></svg>
      ) : <span className="w-1" />}
      <span className={warn ? 'ml-px' : 'ml-0.5'}>123.PRT</span>
    </div>
  )
}

function Grip() {
  return <svg viewBox="0 0 2 14" className="h-3.5 w-0.5"><path d="M1 0v14" stroke="#999" strokeWidth="2" strokeDasharray="2 2" /></svg>
}

function ToolBtn({ icon, className = 'w-6' }: { icon: string; className?: string }) {
  return <button aria-label={icon} className={`flex h-6 shrink-0 items-center justify-center ${className}`}><Icon name={icon} /></button>
}

function FilterRow({ id, className }: { id: string; className: string }) {
  return (
    <div className="flex h-[29px] items-center">
      <Icon name="funnel" />
      <label htmlFor={id} className="sr-only">过滤</label>
      <div className={`ml-1 flex h-[29px] items-center border border-[#9cc] ${className}`}>
        <input id={id} className="h-full w-0 flex-1 px-1 outline-none" />
        <button aria-label="清除" className="mr-[5px] flex">
          <svg viewBox="0 0 9 9" className="size-[9px]"><path d="M1 1l7 7M8 1L1 8" stroke="#777" strokeWidth="1.300" /></svg>
        </button>
      </div>
      <button aria-label="选项" className="flex w-[18px] justify-center"><Caret /></button>
      <button aria-label="添加" className="ml-[3px] flex w-5 justify-center"><Icon name="plus" size="size-3.5" /></button>
    </div>
  )
}

function ScrollBar({ thumb, rest, className }: { thumb: string; rest: string; className: string }) {
  return (
    <div className={`flex h-[15px] border border-[#ccc] ${className}`}>
      <button aria-label="向左" className="flex w-3.5 items-center justify-center border-r-2 border-[#ccc]"><svg viewBox="0 0 4 7" className="h-[7px] w-1"><path d="M4 0v7L0 3.500z" fill="#888" /></svg></button>
      <span className={thumb} />
      <span className={`bg-[#ccc] ${rest}`} />
      <button aria-label="向右" className="flex flex-1 items-center justify-center"><svg viewBox="0 0 4 7" className="h-[7px] w-1"><path d="M0 0v7l4-3.500z" fill="#888" /></svg></button>
    </div>
  )
}

function TreePanel() {
  return (
    <aside className="flex w-[756px] shrink-0 flex-col border-b border-[#9cc] bg-white text-xs text-[#333]">
      <div className="flex h-[30px] items-center gap-3.5 pb-1 pl-1.5">
        <Icon name="tree" />
        <Icon name="folders" />
      </div>
      <div className="flex min-h-0 flex-1">
        <div className="flex w-[153px] shrink-0 flex-col pl-1">
          <div className="flex h-7 items-start">
            <ToolBtn icon="cubeGreen" className="w-[22px]" />
            <span className="flex h-6 w-3 items-center"><Grip /></span>
            <ToolBtn icon="treeBlue" className="ml-[7px] w-6" />
            <ToolBtn icon="treeDots" className="w-[22px]" />
            <span className="w-[37px] pr-1.5 text-right text-sm leading-[22px]">»</span>
            <ToolBtn icon="docSettings" />
          </div>
          <div className="pl-[3px]">
            <FilterRow id="filter-model" className="w-[82px]" />
          </div>
          <div className="mt-1 flex h-6 border-b border-[#bbb]">
            <span className="w-[90px] border-r border-[#bbb]" />
            <span className="pl-1.5 text-[13px] leading-6">project_s</span>
          </div>
          <div className="w-[90px] overflow-hidden pl-0.5">
            <RootNode warn />
            <ul className="pl-1">
              <Branch icon="designItems" text="设计项" />
              <Branch icon="localGroup" text="LOCAL_GROUP" />
            </ul>
            <ul className="pl-[7px]">
              {FEATURES.map((f, i) => <Leaf key={f.text} {...f} last={i === FEATURES.length - 1} />)}
            </ul>
          </div>
          <div className="my-1.5 h-0.5 bg-[#6c3]" />
          <ul className="pl-[9px]">
            <Leaf
              icon="sketch"
              text="草绘 2"
              last
              mark={<svg viewBox="0 0 8 8" className="mb-1.5 size-2"><path d="M1 1l6 6M7 1L1 7M4 0v8M0 4h8" stroke="#330" /><path d="M2 2h4v4H2z" fill="#ff0" /></svg>}
            />
          </ul>
          <div className="mt-auto mb-1.5 flex">
            <ScrollBar className="w-[91px]" thumb="w-[37px]" rest="w-6" />
            <ScrollBar className="flex-1" thumb="w-5" rest="w-[7px]" />
          </div>
        </div>

        <div className="flex w-[337px] shrink-0 flex-col">
          <div className="flex h-7 items-start pl-0.5">
            <ToolBtn icon="treeCube" />
            <span className="ml-1 flex h-6 w-3 items-center"><Grip /></span>
            <ToolBtn icon="treeBlue" className="ml-1 w-6" />
            <ToolBtn icon="treeDots" className="w-[22px]" />
            <ToolBtn icon="columns" className="ml-0.5 w-6 border border-[#99c] bg-[#ccc]" />
            <span className="mx-1 h-6 border-l border-[#ccc]" />
            <ToolBtn icon="cubeBall" className="w-6 border border-[#99c] bg-[#ccc]" />
            <ToolBtn icon="quiltEye" className="w-6 border border-[#99c] bg-[#ccc]" />
            <span className="mx-1 h-6 border-l border-[#ccc]" />
            <ToolBtn icon="tableDoc" />
            <ToolBtn icon="docSettings" className="mr-px ml-auto w-6" />
          </div>
          <div className="pl-1.5">
            <FilterRow id="filter-body" className="w-[267px]" />
          </div>
          <div className="mt-px pl-[5px]">
            <RootNode />
            <ul className="pl-[5px]">
              <Branch icon="quilt" text="面组 (1)" />
              <Branch icon="bodies" text="主体 (1)" open />
              <li>
                <ul className="pl-5"><Branch icon="body" text="主体 1" open /></ul>
                <ul className="pl-[43px]">
                  {BODY_FEATURES.map((f, i) => <Leaf key={f.text} {...f} last={i === BODY_FEATURES.length - 1} />)}
                </ul>
              </li>
            </ul>
          </div>
        </div>

        <div className="flex min-w-0 flex-1 flex-col">
          <div className="flex h-7 items-start pl-0.5">
            <ToolBtn icon="treeCursor" />
            <span className="ml-1 flex h-6 w-3 items-center"><Grip /></span>
            <ToolBtn icon="treeBlue" className="ml-1 w-6" />
            <ToolBtn icon="treeDots" className="w-[22px]" />
            <span className="mr-[5px] ml-1.5 h-6 border-l border-[#ccc]" />
            <ToolBtn icon="treeHi" />
            <ToolBtn icon="arrowL" />
            <ToolBtn icon="arrowR" />
            <ToolBtn icon="docSettings" className="mr-2 ml-auto w-6" />
          </div>
          <div className="flex h-6 items-center pl-1.5">
            <RootNode warn />
          </div>
        </div>
      </div>
    </aside>
  )
}

const AXIS = '#d6d600'
const DIM = '#3399dd'
const RED = '#ff0033'

const LABELS: { x: number; y: number; text: string; box?: [number, number, number, number] }[] = [
  { x: 974, y: 415, text: '255.30', box: [981, 399, 50, 24] },
  { x: 952, y: 439, text: '71.58', box: [981, 423, 20, 24] },
  { x: 1123, y: 366, text: '58.06', box: [1112, 350, 46, 24] },
  { x: 1104, y: 393, text: '90.63', box: [1092, 377, 61, 24] },
  { x: 1188, y: 400, text: '103.39', box: [1175, 384, 66, 25] },
  { x: 1277, y: 447, text: '116.12', box: [1264, 431, 70, 24] },
  { x: 1352, y: 494, text: '71.56', box: [1340, 478, 52, 24] },
  { x: 1048, y: 482, text: '45.75', box: [1047, 466, 49, 24] },
  { x: 1040, y: 506, text: '90.07', box: [1028, 491, 61, 24] },
  { x: 1114, y: 511, text: '513.78', box: [1102, 495, 69, 24] },
  { x: 948, y: 615, text: '179.61' },
]

// constraint markers: horizontal, vertical, equal, perpendicular
const MARKS: [number, number, 'h' | 'v' | 'e' | 'p'][] = [
  [1069, 351, 'h'], [1140, 342, 'v'], [1176, 342, 'e'], [1163, 398, 'h'], [1223, 417, 'v'],
  [1259, 400, 'e'], [1253, 444, 'h'], [1317, 464, 'v'], [1353, 432, 'e'], [1360, 455, 'h'],
  [1375, 510, 'v'], [997, 461, 'v'], [992, 526, 'p'],
]

const MARK_PATHS = { h: 'M-6 .5H7', v: 'M.5-6V7', e: 'M-5-1H6M-5 2H6', p: 'M.5-6V3M-5 3.500H6' }

const POINTS = [[979, 333], [1159, 333], [1159, 380], [1242, 380], [1242, 426], [1335, 426], [1335, 473], [1393, 473], [1393, 539], [979, 539], [1046, 466]]

function Arrow({ x, y, turn, color }: { x: number; y: number; turn: number; color: string }) {
  return <path d="M0 0L12-3V3z" fill={color} transform={`translate(${x} ${y}) rotate(${turn})`} />
}

function Sketch() {
  return (
    <svg viewBox="757 191 1158 827" className="absolute top-0 left-0 h-[827px] w-[1158px]">
      <path d="M979.500 333.500H1159V380h83v46.500h93v47h58V539H979.500z" fill="#330033" />
      <circle cx="1046.500" cy="466" r="29" fill="#000" />
      {LABELS.map((l) => l.box && <rect key={l.text} x={l.box[0]} y={l.box[1]} width={l.box[2]} height={l.box[3]} fill="#000" />)}

      <path d="M971 691h229v81H971z" fill="#666" />
      <path d="M1006 692h159v77h-159z" fill="#999" />
      <path d="M1006 692v80M1168 692v80M971.500 692v80M971 691.500h229M1199.500 692v80" stroke="#333" strokeWidth="1.500" />
      <path d="M1165.500 692v78" stroke="#696" strokeWidth="2" />
      <path d="M1007 770h159" stroke="#699" strokeWidth="2" />
      <path d="M971 772.500h229" stroke="#003" />
      <ellipse cx="1001.500" cy="740" rx="3.500" ry="6" />
      <circle cx="1051" cy="754.500" r="6" />
      <circle cx="1120.500" cy="725.500" r="6" />
      <ellipse cx="1176" cy="754.500" rx="5.500" ry="8" />
      <path d="M971 772v18M1199.500 773v17M970 789.500h230M1073.500 790v3h8V790" stroke="#e00" strokeWidth="1.500" fill="none" />

      <path d="M1086 191v827M757 683h1158" stroke={AXIS} strokeWidth="2" strokeDasharray="2 2" />

      <path d="M996 340v59M996 423v115" stroke="#3366cc" strokeWidth="2" />
      <g stroke={DIM} strokeWidth="1.300" fill="none">
        <path d="M981 507.500h47M1089 507.500h13M1171 507.500h220" />
        <path d="M1001 435h13l33 31M1058.500 478v13M1058.500 515v14M1047 466.500h19M1046.500 466v20" />
        <path d="M1098 389.500h-10M1158.500 385v10M1170 396.500h5M1242.500 431v20M1242 443.500h22M1335.500 478v20" />
        <path d="M962 539.500h14M970.500 545v54M970.500 623v50M962 683.500h14" />
      </g>
      <path d="M1134 380.500h20" stroke="#006" />
      <path d="M1028 507.500h61" stroke="#022" />
      <path d="M979.500 333.500H1159V380h83v46.500h93v47h58V539H979.500z" fill="none" stroke="#ffff00" strokeWidth="2" />
      <circle cx="1046.500" cy="466.500" r="29" fill="none" stroke="#ffff00" strokeWidth="2" />
      <path d="M1037 466.500h19M1046.500 456v19" stroke="#ff0" strokeWidth="2" />
      <path d="M1188.500 326v7M1271.500 384v7M1365.500 417v7" stroke="#ff0" />
      {POINTS.map(([x, y]) => <rect key={`${x}-${y}`} x={x - 1} y={y - 1} width="3" height="3" fill={B} />)}

      <Arrow x={996} y={335} turn={90} color={RED} />
      <Arrow x={1142} y={380} turn={-90} color={RED} />
      <Arrow x={1087} y={389} turn={0} color={DIM} />
      <Arrow x={1158} y={389} turn={180} color={RED} />
      <Arrow x={1241} y={396} turn={180} color={RED} />
      <Arrow x={1334} y={443} turn={180} color={RED} />
      <Arrow x={1336} y={490} turn={0} color={DIM} />
      <Arrow x={1392} y={490} turn={180} color={RED} />
      <Arrow x={981} y={507} turn={0} color={RED} />
      <Arrow x={1392} y={507} turn={180} color={DIM} />
      <Arrow x={1026} y={446} turn={42} color={RED} />
      <Arrow x={1047} y={478} turn={0} color={RED} />
      <Arrow x={1086} y={478} turn={180} color={DIM} />
      <Arrow x={1058} y={466} turn={90} color={RED} />
      <Arrow x={1058} y={538} turn={-90} color={DIM} />
      <Arrow x={970} y={540} turn={90} color={RED} />
      <Arrow x={970} y={683} turn={-90} color={DIM} />

      <g fill="#3399ff" fontFamily="Liberation Mono, monospace" fontSize="12">
        {LABELS.map((l) => <text key={l.text} x={l.x} y={l.y}>{l.text}</text>)}
      </g>
      <path d="M930 445l11-19" stroke={DIM} strokeWidth="1.300" />
      <ellipse cx="935" cy="435.500" rx="6" ry="6.500" fill="none" stroke={DIM} strokeWidth="1.300" />

      {MARKS.map(([x, y, kind]) => (
        <g key={`${x}-${y}`} transform={`translate(${x} ${y})`}>
          <circle cx=".5" cy=".5" r="8" fill="#fff" />
          <path d={MARK_PATHS[kind]} stroke={kind === 'e' ? '#888' : '#222'} strokeWidth={kind === 'e' ? 2 : 1.3} />
        </g>
      ))}
      <path d="M900 310v16l4-4 3 7 2.500-1-3-7h5z" fill="#fff" />
    </svg>
  )
}

const VIEW_TOOLS = ['zoomFit', 'zoomIn', 'zoomOut', 'repaint', 'shaded', 'views', 'camera', 'axes', 'planes', 'axis', 'points', 'csysTan', 'sketchView', 'section', 'crystal', 'dims', 'constr', 'annot', 'spin']

function ViewBar() {
  return (
    <div className="absolute top-[7px] left-[330px] flex border border-[#9cc] bg-white px-0.5 py-[3px]">
      {VIEW_TOOLS.map((t) => (
        <button key={t} aria-label={t} className={`mx-px flex size-6 items-center justify-center ${t === 'annot' ? 'border border-[#99c] bg-[#ccc]' : ''}`}>
          <Icon name={t} />
        </button>
      ))}
    </div>
  )
}

function RecBtn({ text, off, className }: { text: string; off?: boolean; className: string }) {
  return (
    <button className={`h-[22px] border border-r-2 border-b-2 border-[#ccc] border-r-[#777] border-b-[#777] leading-[18px] ${off ? 'text-[#999]' : ''} ${className}`}>
      {text}
    </button>
  )
}

function RecCheck({ id, text, checked }: { id: string; text: string; checked?: boolean }) {
  return (
    <div className="flex h-[22px] items-center">
      <input
        id={id}
        type="checkbox"
        defaultChecked={checked}
        className="peer ml-px size-[15px] shrink-0 appearance-none border border-t-2 border-l-2 border-[#ccc] border-t-black border-l-black"
      />
      <svg viewBox="0 0 10 10" className="pointer-events-none -ml-3 hidden size-2.5 shrink-0 peer-checked:block"><path d="M1 4l3 4 5-7" fill="none" stroke="#000" strokeWidth="1.600" /></svg>
      <label htmlFor={id} className={`whitespace-nowrap ${checked ? 'ml-[7px]' : 'ml-[5px]'}`}>{text}</label>
    </div>
  )
}

function RecSelect({ id, value, className }: { id: string; value: string; className: string }) {
  return (
    <div className="relative">
      <select id={id} defaultValue={value} className={`block h-[18px] appearance-none border border-r-2 border-b-2 border-black bg-white leading-[15px] ${className}`}>
        <option>{value}</option>
      </select>
      <svg viewBox="0 0 8 8" className="pointer-events-none absolute top-1 right-1.5 size-2"><path d="M0 0h8L4 8z" /></svg>
    </div>
  )
}

function Legend({ text }: { text: string }) {
  return (
    <div className="flex h-[15px] items-center gap-[3px] leading-[15px]">
      <span className="w-[9px] border-t border-black" />
      {text}
      <span className="flex-1 border-t border-black" />
    </div>
  )
}

function Recorder() {
  return (
    <div className="absolute top-1 right-[4px] w-[158px] border border-[#666] bg-white px-1 pb-px text-xs font-bold text-black shadow-[0_0_0_3px_rgba(0,0,0,0.2)]">
      <div className="flex h-6 items-center">
        <svg viewBox="0 0 16 16" className="size-4">
          <path d="M0 15V3h11v3h4v9z" fill="#fff" />
          <path d="M0 3h11v3H0z" fill="#3cc" />
          <path d="M0 3l3 2 3-2 3 2 2-2M12 1h3v8h-3zM0 15h16V9" stroke="#000" fill="none" />
          <circle cx="3.500" cy="9.500" r="3" fill="#fff" stroke="#000" />
          <circle cx="9" cy="9.500" r="3" fill="#fff" stroke="#000" />
        </svg>
        <button aria-label="最小化" className="ml-[17px] h-px w-2.5 bg-black" />
        <button aria-label="最大化" className="ml-[35px] size-2.5 border border-[#ccc]" />
        <button aria-label="关闭" className="ml-9"><svg viewBox="0 0 10 10" className="size-2.5"><path d="M0 0l10 10M10 0L0 10" stroke="#000" /></svg></button>
      </div>
      <div className="flex h-[25px] items-start gap-3.5 pt-0.5 pl-[3px] leading-[18px] font-normal">
        <button>文件(F)</button>
        <button className="text-[#777]">编辑(E)</button>
      </div>
      <div className="flex h-[25px] items-center justify-center border-y-3 border-double border-black">
        <span className="font-['Liberation_Sans']">Unregistered Copy</span>
      </div>
      <div className="mt-[3px] flex gap-0.5">
        <RecBtn text="开始" off className="w-[45px]" />
        <RecBtn text="捕捉" off className="w-[45px]" />
        <RecBtn text="停止" className="w-[45px]" />
      </div>
      <p className="mt-px mb-3.5 leading-4">0 帧 (0 字节)</p>
      <Legend text="捕捉区域" />
      <p className="leading-[15px]">尺寸：1916x1019</p>
      <p className="leading-[15px]">左上角：3,0</p>
      <div className="mt-px flex items-center justify-between">
        <RecCheck id="rec-area" text="显示区域" />
        <RecBtn text="选择区域" off className="w-[70px]" />
      </div>
      <RecBtn text="刷新屏幕" className="mt-0.5 w-[71px]" />
      <div className="h-[18px]" />
      <Legend text="捕捉选项" />
      <div className="flex h-5 items-center justify-between pr-[26px]">
        <label htmlFor="rec-fps">帧数/秒：</label>
        <RecSelect id="rec-fps" value="4 fps" className="w-[62px] pl-3" />
      </div>
      <RecCheck id="rec-alpha" text="透明" checked />
      <RecCheck id="rec-time" text="记录时间信息" checked />
      <RecCheck id="rec-loop" text="循环" checked />
      <RecCheck id="rec-edge" text="描边" checked />
      <RecCheck id="rec-wave" text="条" checked />
      <RecCheck id="rec-exif" text="E." checked />
      <div className="flex h-5 items-center justify-between pr-6">
        <label htmlFor="rec-scale">录制比例：</label>
        <RecSelect id="rec-scale" value="100%" className="w-[57px] pl-3" />
      </div>
    </div>
  )
}

function NetMonitor() {
  return (
    <div className="absolute top-[359px] right-[13px] flex h-[51px] w-[122px] items-center rounded-full border border-[#ccc] bg-white pl-1.5 text-[11px] text-[#667] shadow-[0_8px_0_#ccc]">
      <svg viewBox="0 0 38 38" className="size-[38px]">
        <circle cx="19" cy="19" r="19" fill="#33cc66" />
        <path d="M6 16c7-8 19-8 26 0M10 21c5-6 13-6 18 0M14 25c3-3 7-3 10 0" stroke="#fff" strokeWidth="2.800" fill="none" />
        <circle cx="19" cy="29" r="2" fill="#fff" />
      </svg>
      <div className="ml-1.5 flex flex-col">
        <span className="flex h-5 items-center gap-[5px]">
          <svg viewBox="0 0 10 10" className="size-2.5"><path d="M3.500 0v10L0 6" fill="none" stroke="#3c6" strokeWidth="2" /><path d="M6.500 10V0L10 4" fill="none" stroke="#f60" strokeWidth="2" /></svg>
          0.00K/s
        </span>
        <span className="flex h-5 items-center gap-[5px]">
          <svg viewBox="0 0 10 12" className="h-3 w-2.5"><path d="M1 2h8v9H1z" fill="none" stroke="#1c6" strokeWidth="1.600" /><path d="M1 6h8v5H1zM6 0h2v2H6z" fill="#1c6" /></svg>
          0
        </span>
      </div>
    </div>
  )
}

const IME: Record<string, ReactNode> = {
  punct: <><circle cx="4" cy="5" r="2" fill="none" stroke="#06c" strokeWidth="1.500" /><path d="M10 8h3v3l-2 3" fill="none" stroke="#06c" strokeWidth="2" /></>,
  mic: <><rect x="5" y="0" width="6" height="10" rx="3" fill="#06c" /><path d="M2 7c0 7 12 7 12 0M8 12v3M5 15.500h6" fill="none" stroke="#06c" strokeWidth="1.500" /></>,
  keys: <><rect x="1" y="3" width="14" height="10" rx="1" fill="none" stroke="#06c" strokeWidth="1.500" /><path d="M3 6h10M3 8.500h10" stroke="#06c" strokeWidth="1.500" strokeDasharray="2 1" /><path d="M5 11h6" stroke="#06c" strokeWidth="1.300" /></>,
  shirt: <path d="M4 1l2 2h4l2-2 4 4-3 3v7H3V8L0 5z" fill="#06c" />,
  game: <><path d="M2 3c2-3 10-3 12 0l1 6-2 2-2-2H5l-2 2-2-2zM3 11l-2 4h3l1-2zM13 11l2 4h-3l-1-2z" fill="#06c" /><path d="M5 3.500v4M3 5.500h4M10 4.500h2M11 7h2" stroke="#fff" strokeWidth="1.200" /></>,
  grid: <><rect x="1" y="1" width="6" height="6" rx="1.500" fill="#06c" /><circle cx="12" cy="4" r="2.500" fill="none" stroke="#06c" strokeWidth="1.500" /><rect x="1" y="9" width="6" height="6" rx="1.500" fill="#06c" /><rect x="9" y="9" width="6" height="6" rx="1.500" fill="#06c" /></>,
  badge: <><path d="M8 0l2 3 4-1-1 4 3 2-3 2 1 4-4-1-2 3-2-3-4 1 1-4-3-2 3-2-1-4 4 1z" fill="#06c" /><path d="M6 12V8a2 2 0 114 0v4" fill="none" stroke="#fff" strokeWidth="1.300" /><path d="M8 8v6" stroke="#fff" strokeWidth="1.200" /></>,
}

function ImeBar() {
  return (
    <div className="absolute top-[609px] right-0 flex h-[26px] items-center bg-white pl-[9px]">
      <svg viewBox="0 0 32 32" className="absolute -top-1 -left-[25px] size-8">
        <path d="M2 6l22-5c2 0 3 1 4 3l4 18c0 3-1 4-3 5L9 31c-3 0-4-1-4-3L1 9z" fill="#f63" />
        <path d="M25 9C16 6 8 8 9 13c1 4 14 1 15 6 0 5-10 6-16 3" fill="none" stroke="#fff" strokeWidth="4.500" />
      </svg>
      <button className="w-6 text-center text-sm font-bold text-[#06c]">中</button>
      {Object.keys(IME).map((k) => (
        <button key={k} aria-label={k} className="flex w-6 justify-center last:w-[22px]">
          <svg viewBox="0 0 16 16" className="size-4">{IME[k]}</svg>
        </button>
      ))}
    </div>
  )
}

export default function App() {
  return (
    <div className="relative flex h-screen min-h-[800px] flex-col overflow-hidden border border-black bg-white font-['Noto_Sans','Noto_Sans_CJK_SC',sans-serif]">
      <header className="flex h-6 shrink-0 items-center pl-[5px]">
        <Icon name="part" />
        <span className="ml-1 font-['Lato'] text-lg leading-5 font-medium text-[#444]">creo</span>
        <svg viewBox="0 0 3 3" className="mb-1.5 size-[3px]"><circle cx="1.500" cy="1.500" r="1.500" fill="#444" /></svg>
        <h1 className="flex-1 pr-[63px] text-center text-[13px] leading-6 text-[#ccc]">
          123 (活动的) f:\Users\fgy\Desktop\1\11\123.prt.4 - Creo Parametric 11.0
        </h1>
      </header>

      <nav className="flex h-[29px] shrink-0 items-stretch overflow-hidden bg-[#333] text-[13px] whitespace-nowrap text-white">
        <button className="w-[62px] shrink-0 bg-linear-to-br from-[#6c3] from-70% to-[#693] to-70%">文件</button>
        {TABS.map((t) => <button key={t.text} className={`mr-px shrink-0 ${t.pad ?? 'px-[23px]'}`}>{t.text}</button>)}
        <button className="w-[73px] shrink-0 bg-white text-sm text-[#333] italic">草绘</button>
      </nav>

      <Ribbon />
      <QuickBar />

      <main className="flex min-h-0 flex-1">
        <TreePanel />
        <section className="relative min-w-0 flex-1 overflow-hidden bg-black">
          <Sketch />
          <ViewBar />
          <ImeBar />
        </section>
      </main>

      <Recorder />
      <NetMonitor />
    </div>
  )
}
